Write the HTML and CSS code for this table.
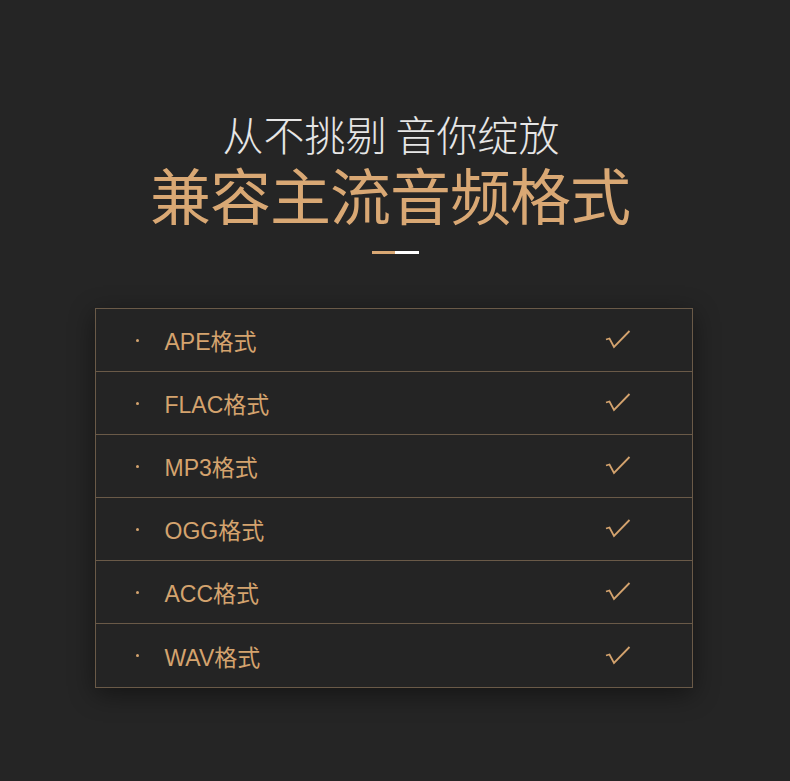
FILE: index.html
```html
<!DOCTYPE html>
<html lang="zh-CN">
<head>
  <meta charset="UTF-8">
  <title>兼容主流音频格式</title>
  <link rel="stylesheet" href="styles.css">
</head>
<body>
  <div class="page">
    <h2 class="sub-title">从不挑剔 音你绽放</h2>
    <h1 class="main-title">兼容主流音频格式</h1>
    <div class="divider"><span class="gold"></span><span class="white"></span></div>

    <ul class="format-list">
      <li class="format-row"><span class="dot"></span><span class="name">APE格式</span><svg class="check" viewBox="0 0 26 20"><path d="M1 9.5 L4.5 8.5 L9 17 L24.5 1"/></svg></li>
      <li class="format-row"><span class="dot"></span><span class="name">FLAC格式</span><svg class="check" viewBox="0 0 26 20"><path d="M1 9.5 L4.5 8.5 L9 17 L24.5 1"/></svg></li>
      <li class="format-row"><span class="dot"></span><span class="name">MP3格式</span><svg class="check" viewBox="0 0 26 20"><path d="M1 9.5 L4.5 8.5 L9 17 L24.5 1"/></svg></li>
      <li class="format-row"><span class="dot"></span><span class="name">OGG格式</span><svg class="check" viewBox="0 0 26 20"><path d="M1 9.5 L4.5 8.5 L9 17 L24.5 1"/></svg></li>
      <li class="format-row"><span class="dot"></span><span class="name">ACC格式</span><svg class="check" viewBox="0 0 26 20"><path d="M1 9.5 L4.5 8.5 L9 17 L24.5 1"/></svg></li>
      <li class="format-row"><span class="dot"></span><span class="name">WAV格式</span><svg class="check" viewBox="0 0 26 20"><path d="M1 9.5 L4.5 8.5 L9 17 L24.5 1"/></svg></li>
    </ul>
  </div>
</body>
</html>
```

FILE: styles.css
```css
body {
  margin: 0;
  background-color: #252525;
  font-family: "Noto Sans CJK SC", "Noto Sans", sans-serif;
}
.page {
  width: 790px;
  height: 781px;
  display: flex;
  flex-direction: column;
  align-items: center;
  padding-top: 111px;
  box-sizing: border-box;
}
.sub-title {
  margin: 0;
  padding-right: 8px;
  font-size: 41px;
  font-weight: 300;
  line-height: 44px;
  color: #e6e6e6;
}
.main-title {
  margin: 8px 0 0;
  padding-right: 10px;
  font-size: 61px;
  font-weight: 400;
  line-height: 62px;
  color: #d9a874;
  letter-spacing: -1px;
}
.divider {
  display: flex;
  margin-top: 26px;
  height: 3px;
}
.divider .gold {
  width: 23px;
  background: #d9a874;
}
.divider .white {
  width: 24px;
  background: #ffffff;
}
.format-list {
  list-style: none;
  margin: 54px 3px 0 0;
  padding: 0;
  width: 598px;
  box-sizing: border-box;
  border: 1px solid #6a5a48;
  box-shadow: 0 6px 24px rgba(0, 0, 0, 0.45);
  background: #242424;
}
.format-row {
  display: flex;
  align-items: center;
  height: 62px;
  border-bottom: 1px solid #6a5a48;
  color: #d4a36e;
  font-family: "Liberation Sans", "Noto Sans CJK SC", sans-serif;
  font-size: 23px;
}
.format-row:last-child {
  height: 63px;
  border-bottom: none;
}
.dot {
  width: 3px;
  height: 3px;
  margin: 0 26px 0 40px;
  border-radius: 50%;
  background: #d4a36e;
}
.name {
  flex: 1;
}
.check {
  width: 26px;
  height: 20px;
  margin-right: 61px;
  fill: none;
  stroke: #d4a36e;
  stroke-width: 1.8;
  stroke-linejoin: miter;
}
```
